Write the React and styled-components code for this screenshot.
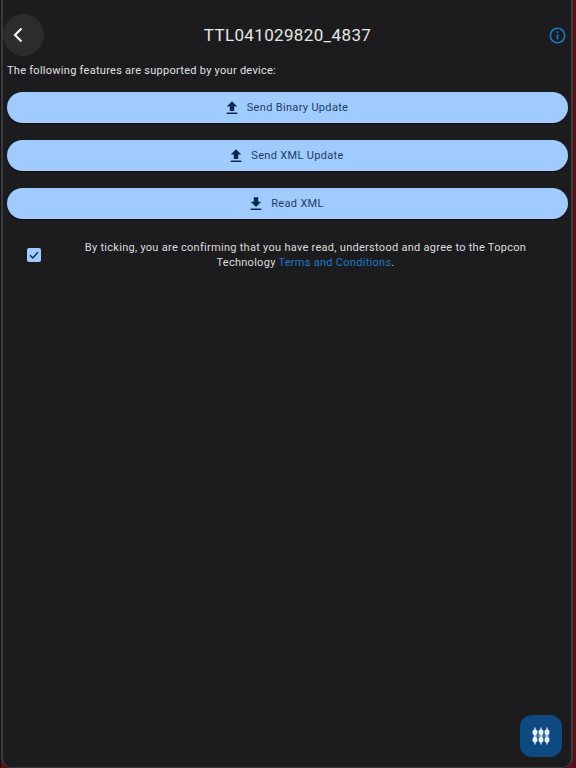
import styled, { createGlobalStyle } from "styled-components";

const GlobalStyle = createGlobalStyle`
  html, body {
    margin: 0;
    padding: 0;
    background: #1c1c1f;
  }
  * {
    box-sizing: border-box;
  }
`;

const Screen = styled.div`
  width: 576px;
  height: 768px;
  position: relative;
  overflow: hidden;
  background: #5c0d18;
  border-left: 1px solid #141416;
  border-right: 3px solid #5c0d18;
  font-family: Roboto, "Liberation Sans", sans-serif;
`;

const Frame = styled.div`
  height: 100%;
  padding: 0 3px 0 4px;
  background: #1c1c1f;
  border-left: 2px solid #3a3a3c;
  border-right: 2px solid #3a3a3c;
  border-bottom: 1px solid #3a3a3c;
  border-bottom-left-radius: 10px;
  border-bottom-right-radius: 10px;
  display: flex;
  flex-direction: column;
`;

const Header = styled.header`
  height: 42px;
  margin-top: 14px;
  display: grid;
  grid-template-columns: 50px 1fr 50px;
  align-items: center;
`;

const BackButton = styled.button`
  width: 41px;
  height: 42px;
  margin-left: -4px;
  border: none;
  padding: 0;
  border-radius: 50%;
  background: #2c2c2e;
  color: #f2f2f2;
  display: flex;
  align-items: center;
  justify-content: center;
`;

const Title = styled.h1`
  margin: 0;
  text-align: center;
  font-size: 17px;
  font-weight: 400;
  letter-spacing: 0.35px;
  color: #e6e6e6;
`;

const InfoButton = styled.div`
  justify-self: end;
  margin-right: 2px;
  display: flex;
  color: #1a78c8;
`;

const Intro = styled.p`
  margin: 8px 0 14px;
  font-size: 11px;
  line-height: 14px;
  letter-spacing: 0.27px;
  color: #e0e0e0;
`;

const Actions = styled.div`
  display: flex;
  flex-direction: column;
  gap: 17px;
`;

const ActionButton = styled.button`
  height: 31px;
  border: none;
  padding: 0 4px 0 0;
  border-radius: 15.5px;
  background: #a0cbff;
  box-shadow: 0 1px 1px rgba(0, 0, 0, 0.6);
  color: #1f3d63;
  font-family: inherit;
  font-size: 11px;
  letter-spacing: 0.33px;
  display: flex;
  align-items: center;
  justify-content: center;
  gap: 6px;
  svg {
    color: #0c2a50;
  }
`;

const Terms = styled.div`
  margin-top: 21px;
  display: flex;
  align-items: center;
`;

const CheckBox = styled.span`
  width: 14px;
  height: 14px;
  margin-left: 20px;
  flex: none;
  border-radius: 2px;
  background: #a0cbff;
  color: #123056;
  display: flex;
  align-items: center;
  justify-content: center;
`;

const TermsText = styled.p`
  margin: 0 0 0 20px;
  flex: 1;
  padding-right: 18px;
  text-align: center;
  font-size: 11px;
  line-height: 15px;
  letter-spacing: 0.28px;
  color: #dcdcdc;
`;

const TermsLink = styled.a`
  color: #1a78c8;
`;

const Fab = styled.button`
  position: absolute;
  right: 11px;
  bottom: 11px;
  width: 42px;
  height: 42px;
  border: none;
  padding: 0;
  border-radius: 12px;
  background: #0e4a80;
  color: #e8f2fb;
  display: flex;
  align-items: center;
  justify-content: center;
`;

const ChevronLeft = () => (
  <svg width="24" height="24" viewBox="0 0 24 24" fill="none" stroke="currentColor" strokeWidth="2.2" style={{ marginLeft: -12 }}>
    <path d="M15.5 5.5 9 12l6.5 6.5" />
  </svg>
);

const InfoIcon = () => (
  <svg width="17" height="17" viewBox="0 0 17 17" fill="none" stroke="currentColor">
    <circle cx="8.5" cy="8.5" r="7.2" strokeWidth="1.6" />
    <path d="M8.5 7.4v5" strokeWidth="1.8" />
    <path d="M8.5 4.2v1.8" strokeWidth="1.8" />
  </svg>
);

const UploadIcon = () => (
  <svg width="18" height="18" viewBox="0 0 24 24" fill="currentColor">
    <path d="M9 16h6v-6h4l-7-7-7 7h4v6zm-4 2h14v2H5v-2z" />
  </svg>
);

const DownloadIcon = () => (
  <svg width="18" height="18" viewBox="0 0 24 24" fill="currentColor">
    <path d="M19 9h-4V3H9v6H5l7 7 7-7zM5 18v2h14v-2H5z" />
  </svg>
);

const CheckIcon = () => (
  <svg width="12" height="12" viewBox="0 0 12 12" fill="none" stroke="currentColor" strokeWidth="1.5">
    <path d="M2 6.2 4.8 9 10 3.2" />
  </svg>
);

const PinsIcon = () => (
  <svg width="18" height="18" viewBox="0 0 18 18" fill="currentColor">
    {[3, 9, 15].map((x) => (
      <g key={x}>
        <rect x={x - 0.6} y="0.5" width="1.2" height="17" />
        <rect x={x - 2.4} y="2.5" width="4.8" height="5.5" rx="1.8" />
        <rect x={x - 2.4} y="10" width="4.8" height="5.5" rx="1.8" />
      </g>
    ))}
    <rect x="1" y="8.4" width="16" height="1.2" opacity="0.6" />
  </svg>
);

const actions = [
  { label: "Send Binary Update", icon: <UploadIcon /> },
  { label: "Send XML Update", icon: <UploadIcon /> },
  { label: "Read XML", icon: <DownloadIcon /> },
];

export default function App() {
  return (
    <Screen>
      <GlobalStyle />
      <Frame>
        <Header>
          <BackButton aria-label="Back">
            <ChevronLeft />
          </BackButton>
          <Title>TTL041029820_4837</Title>
          <InfoButton>
            <InfoIcon />
          </InfoButton>
        </Header>
        <Intro>The following features are supported by your device:</Intro>
        <Actions>
          {actions.map((action) => (
            <ActionButton key={action.label}>
              {action.icon}
              {action.label}
            </ActionButton>
          ))}
        </Actions>
        <Terms>
          <CheckBox>
            <CheckIcon />
          </CheckBox>
          <TermsText>
            By ticking, you are confirming that you have read, understood and agree to the Topcon Technology{" "}
            <TermsLink>Terms and Conditions</TermsLink>.
          </TermsText>
        </Terms>
      </Frame>
      <Fab aria-label="Devices">
        <PinsIcon />
      </Fab>
    </Screen>
  );
}
